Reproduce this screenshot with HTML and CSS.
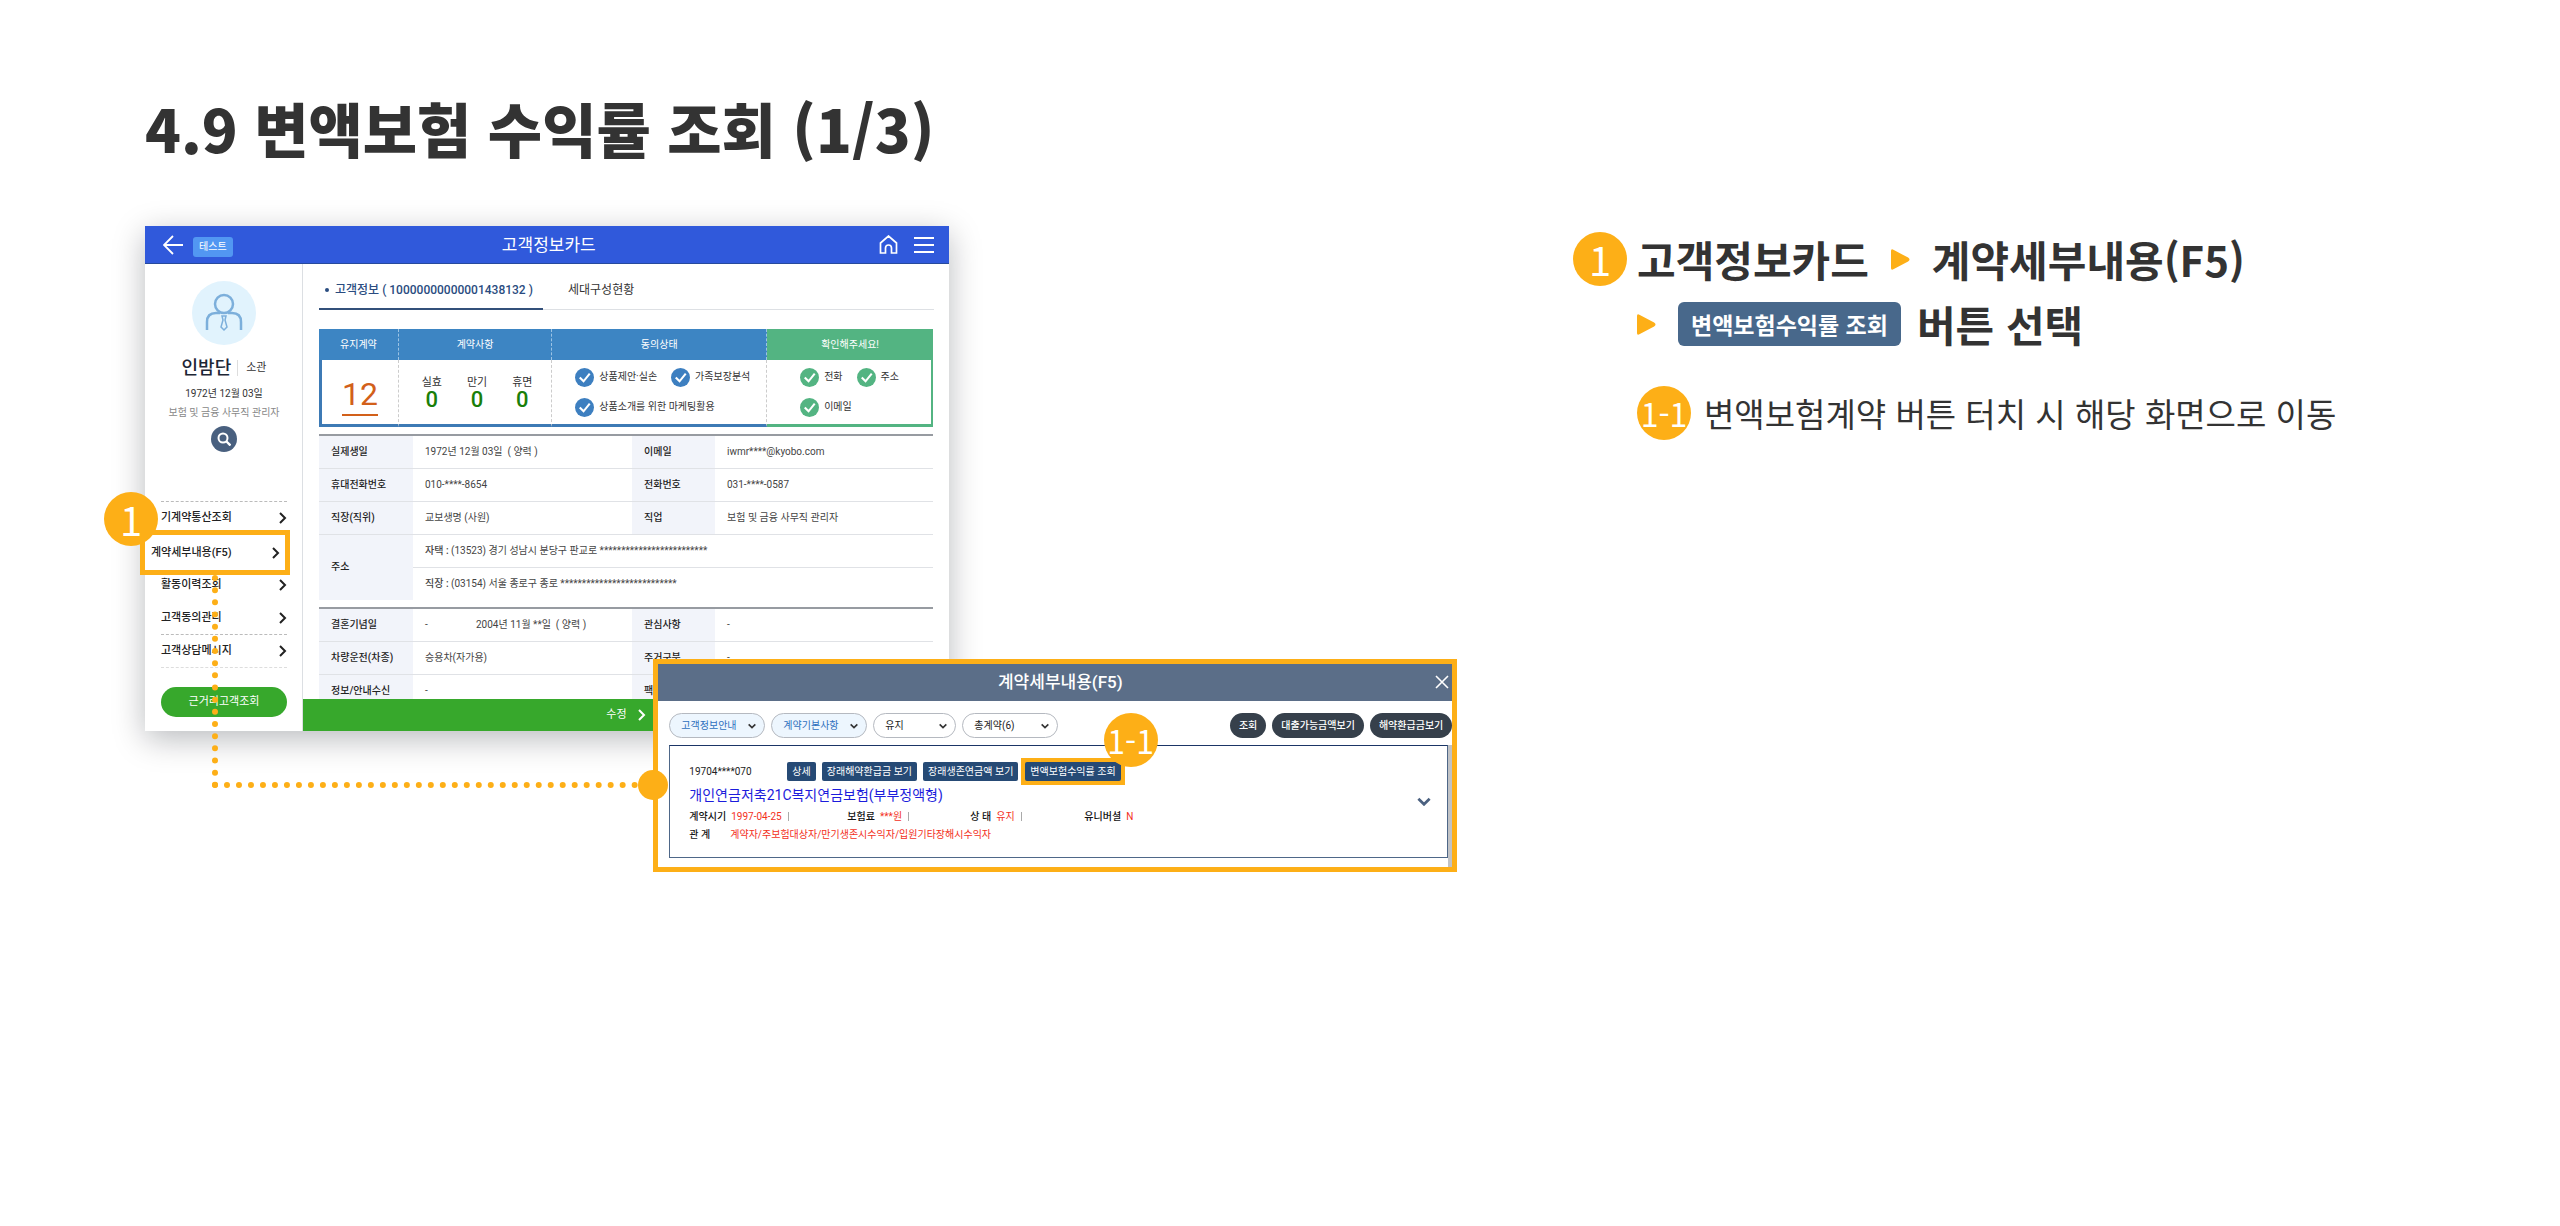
FILE: index.html
```html
<!DOCTYPE html>
<html lang="ko">
<head>
<meta charset="utf-8">
<meta name="viewport" content="width=device-width, initial-scale=1">
<title>4.9 변액보험 수익률 조회</title>
<link rel="stylesheet" href="styles.css">
</head>
<body>
<svg class="defs" aria-hidden="true">
  <symbol id="chev-right" viewBox="0 0 8 12"><path d="M1 1l5 5-5 5" fill="none" stroke="currentColor" stroke-width="2"/></symbol>
  <symbol id="chev-down" viewBox="0 0 12 8"><path d="M1 1.5l5 5 5-5" fill="none" stroke="currentColor" stroke-width="2.4"/></symbol>
  <symbol id="check" viewBox="0 0 20 20"><circle cx="10" cy="10" r="10" fill="currentColor"/><path d="M5 10l4 4 6.500-8" fill="none" stroke="#fff" stroke-width="2.200"/></symbol>
  <symbol id="arrow" viewBox="0 0 20 22"><path d="M0 2q0-3 3-1l15 8q3 2 0 4L3 21q-3 2-3-1z" fill="currentColor"/></symbol>
</svg>
<main class="page">
  <h1 class="page-title">4.9 변액보험 수익률 조회 (1/3)</h1>

  <div class="columns">
    <section class="stage">
      <div class="card">
        <header class="card-head">
          <button class="icon-btn" aria-label="뒤로"><svg width="20" height="20" viewBox="0 0 20 20"><path d="M20 10H1M10 1L1 10l9 9" fill="none" stroke="#fff" stroke-width="1.800"/></svg></button>
          <span class="tag">테스트</span>
          <h2 class="card-title">고객정보카드</h2>
          <button class="icon-btn" aria-label="홈"><svg width="19" height="19" viewBox="0 0 19 19"><path d="M1.500 8L9.500 1l8 7v10h-5v-5q0-3-3-3t-3 3v5h-5z" fill="none" stroke="#fff" stroke-width="1.700"/></svg></button>
          <button class="icon-btn" aria-label="메뉴"><svg width="20" height="18" viewBox="0 0 20 18"><path d="M0 2h20M0 9h20M0 16h20" stroke="#fff" stroke-width="1.800"/></svg></button>
        </header>

        <div class="card-body">
          <aside class="side">
            <svg class="avatar" width="64" height="64" viewBox="0 0 64 64"><circle cx="32" cy="32" r="32" fill="#e1f3fd"/><g fill="none" stroke="#7cafdb" stroke-width="2.500"><circle cx="32" cy="23" r="9"/><path d="M15 49V41q0-9 9-9M49 49V41q0-9-9-9M24 32h4M36 32h4"/><path d="M30 35h4l-1 4 2 7-3 3-3-3 2-7z" stroke-width="1.500"/></g></svg>
            <p class="name-row"><strong class="name">인밤단</strong><span class="name-tag">소관</span></p>
            <p class="birth">1972년 12월 03일</p>
            <p class="job">보험 및 금융 사무직 관리자</p>
            <button class="search" aria-label="검색"><svg width="14" height="14" viewBox="0 0 14 14"><circle cx="6" cy="6" r="4.500" fill="none" stroke="#fff" stroke-width="2"/><path d="M9.500 9.500l4 4" stroke="#fff" stroke-width="2.400"/></svg></button>
            <ul class="menu">
              <li class="menu-item dashed"><a href="#">기계약통산조회<svg width="8" height="12"><use href="#chev-right"/></svg></a></li>
              <li class="menu-item current"><span class="badge badge-menu">1</span><a href="#">계약세부내용(F5)<svg width="8" height="12"><use href="#chev-right"/></svg></a></li>
              <li class="menu-item"><a href="#">활동이력조회<svg width="8" height="12"><use href="#chev-right"/></svg></a></li>
              <li class="menu-item"><a href="#">고객동의관리<svg width="8" height="12"><use href="#chev-right"/></svg></a></li>
              <li class="menu-item dashed last"><a href="#">고객상담메시지<svg width="8" height="12"><use href="#chev-right"/></svg></a></li>
            </ul>
            <button class="near">근거리고객조회</button>
          </aside>

          <div class="content">
            <nav class="tabs">
              <a class="tab on" href="#">고객정보 ( 10000000000001438132 )</a>
              <a class="tab" href="#">세대구성현황</a>
            </nav>

            <table class="summary">
              <colgroup><col class="s1"><col class="s2"><col class="s3"><col class="s4"></colgroup>
              <thead><tr><th>유지계약</th><th>계약사항</th><th>동의상태</th><th class="green">확인해주세요!</th></tr></thead>
              <tbody><tr>
                <td class="total"><a href="#">12</a></td>
                <td><div class="counts"><span>실효<b>0</b></span><span>만기<b>0</b></span><span>휴면<b>0</b></span></div></td>
                <td><div class="checks blue">
                  <span><svg width="19" height="19"><use href="#check"/></svg>상품제안·실손</span>
                  <span><svg width="19" height="19"><use href="#check"/></svg>가족보장분석</span>
                  <span><svg width="19" height="19"><use href="#check"/></svg>상품소개를 위한 마케팅활용</span>
                </div></td>
                <td class="green-cell"><div class="checks mint">
                  <span><svg width="19" height="19"><use href="#check"/></svg>전화</span>
                  <span><svg width="19" height="19"><use href="#check"/></svg>주소</span>
                  <span><svg width="19" height="19"><use href="#check"/></svg>이메일</span>
                </div></td>
              </tr></tbody>
            </table>

            <table class="info">
              <colgroup><col class="k1"><col class="v1"><col class="k2"><col class="v2"></colgroup>
              <tr><th>실제생일</th><td>1972년 12월 03일 &nbsp;( 양력 )</td><th>이메일</th><td>iwmr****@kyobo.com</td></tr>
              <tr><th>휴대전화번호</th><td>010-****-8654</td><th>전화번호</th><td>031-****-0587</td></tr>
              <tr><th>직장(직위)</th><td>교보생명 (사원)</td><th>직업</th><td>보험 및 금융 사무직 관리자</td></tr>
              <tr><th rowspan="2">주소</th><td colspan="3"><b>자택 :</b> (13523) 경기 성남시 분당구 판교로 *************************</td></tr>
              <tr><td colspan="3"><b>직장 :</b> (03154) 서울 종로구 종로 ***************************</td></tr>
            </table>

            <table class="info">
              <colgroup><col class="k1"><col class="v1"><col class="k2"><col class="v2"></colgroup>
              <tr><th>결혼기념일</th><td><span class="dash">-</span>2004년 11월 **일 &nbsp;( 양력 )</td><th>관심사항</th><td>-</td></tr>
              <tr><th>차량운전(차종)</th><td>승용차(자가용)</td><th>주거구분</th><td>-</td></tr>
              <tr><th>정보/안내수신</th><td>-</td><th>팩스</th><td>-</td></tr>
            </table>

            <button class="edit">수정<svg width="8" height="12"><use href="#chev-right"/></svg></button>
          </div>
        </div>
      </div>

      <div class="connector"></div>

      <div class="popup">
        <header class="popup-head">
          <h2 class="popup-title">계약세부내용(F5)</h2>
          <button class="close" aria-label="닫기"><svg width="14" height="14" viewBox="0 0 14 14"><path d="M1 1l12 12M13 1L1 13" stroke="#fff" stroke-width="1.600"/></svg></button>
        </header>
        <div class="filters">
          <span class="pick tinted"><select aria-label="고객정보안내"><option>고객정보안내</option></select><svg width="8" height="6"><use href="#chev-down"/></svg></span>
          <span class="pick tinted"><select aria-label="계약기본사항"><option>계약기본사항</option></select><svg width="8" height="6"><use href="#chev-down"/></svg></span>
          <span class="pick short"><select aria-label="상태"><option>유지</option></select><svg width="8" height="6"><use href="#chev-down"/></svg></span>
          <span class="pick"><select aria-label="총계약"><option>총계약(6)</option></select><svg width="8" height="6"><use href="#chev-down"/></svg></span>
          <div class="actions">
            <button class="pill">조회</button>
            <button class="pill">대출가능금액보기</button>
            <button class="pill">해약환급금보기</button>
          </div>
        </div>
        <div class="list">
          <article class="contract">
            <div class="contract-main">
              <div class="contract-top">
                <span class="number">19704****070</span>
                <button class="small">상세</button>
                <button class="small">장래해약환급금 보기</button>
                <button class="small">장래생존연금액 보기</button>
                <span class="mark"><button class="small">변액보험수익률 조회</button><span class="badge badge-mark">1-1</span></span>
              </div>
              <h3 class="product">개인연금저축21C복지연금보험(부부정액형)</h3>
              <dl class="facts">
                <div><dt>계약시기</dt><dd class="ruled">1997-04-25</dd></div>
                <div><dt>보험료</dt><dd class="ruled">***원</dd></div>
                <div><dt>상 태</dt><dd class="ruled">유지</dd></div>
                <div><dt>유니버셜</dt><dd>N</dd></div>
                <div class="wide"><dt>관 계</dt><dd>계약자/주보험대상자/만기생존시수익자/입원기타장해시수익자</dd></div>
              </dl>
            </div>
            <button class="expand" aria-label="펼치기"><svg width="14" height="9"><use href="#chev-down"/></svg></button>
          </article>
        </div>
        <span class="anchor"></span>
      </div>
    </section>

    <section class="steps">
      <span class="badge">1</span>
      <div class="step-text">
        <p class="step-line">고객정보카드<svg class="arrow gap" width="19" height="21"><use href="#arrow"/></svg>계약세부내용(F5)</p>
        <p class="step-line"><svg class="arrow" width="19" height="21"><use href="#arrow"/></svg><button class="step-btn">변액보험수익률 조회</button>버튼 선택</p>
        <p class="sub-step"><span class="badge badge-sub">1-1</span>변액보험계약 버튼 터치 시 해당 화면으로 이동</p>
      </div>
    </section>
  </div>
</main>
</body>
</html>
```
FILE: styles.css
```css
* { box-sizing: border-box; }
body, h1, h2, h3, p, ul, dl, dd { margin: 0; padding: 0; }
body {
  background: #fff;
  color: #333;
  font-family: "Noto Sans CJK KR", sans-serif;
}
button, select { font: inherit; border: 0; margin: 0; padding: 0; background: none; color: inherit; cursor: pointer; }
a { color: inherit; text-decoration: none; }
svg { display: block; flex: none; }
.defs { position: absolute; width: 0; height: 0; }

.page { padding: 82px 145px 120px; }
.page-title { font-size: 59px; line-height: 92px; font-weight: 900; color: #333; white-space: nowrap; }
.columns { display: grid; grid-template-columns: 1428fr 842fr; padding-top: 52px; }

.badge {
  display: flex; align-items: center; justify-content: center; flex: none;
  width: 54px; height: 54px; border-radius: 50%;
  background: #fdaf17; color: #fff;
  font: 400 40px/54px "Noto Sans CJK KR", sans-serif;
}

/* stage holds the customer card with the detail window laid over it */
.stage {
  position: relative;
  padding-bottom: 141px;
  font-family: Roboto, "Noto Sans CJK KR", sans-serif;
  font-size: 10px;
  line-height: 16px;
  white-space: nowrap;
}
.card { width: 56.3%; background: #fff; box-shadow: 0 8px 30px rgba(0, 10, 20, .28); }
.card-head {
  display: flex; align-items: center; gap: 16px;
  height: 38px; padding: 0 15px 0 18px;
  background: #3059db; border-bottom: 1px solid #274a9c; color: #fff;
}
.icon-btn { display: flex; }
.tag { margin: 4px 0 0 -6px; padding: 2px 6px; border-radius: 3px; background: #5297f2; }
.card-title { flex: 1; margin-right: 14px; text-align: center; font-size: 17px; line-height: 24px; font-weight: 400; }
.card-body { display: grid; grid-template-columns: 158px 1fr; height: 467px; }

.side {
  display: flex; flex-direction: column; align-items: center;
  padding: 17px 15px 13px 16px; border-right: 1px solid #dcdfe3;
}
.name-row { display: flex; align-items: center; margin-top: 10px; }
.name { padding-right: 6px; font-size: 18px; line-height: 26px; font-weight: 500; color: #1d2635; }
.name-tag { padding-left: 8px; border-left: 1px solid #ddd; font-size: 11px; }
.birth { margin-top: 5px; color: #333; }
.job { margin-top: 3px; color: #888; }
.search {
  display: flex; align-items: center; justify-content: center;
  width: 26px; height: 26px; margin-top: 5px; border-radius: 50%; background: #49607f;
}
.menu { list-style: none; width: 126px; margin-top: 49px; }
.menu-item { position: relative; height: 33px; font-size: 11px; color: #222; font-weight: 500; }
.menu-item a { display: flex; align-items: center; justify-content: space-between; height: 100%; }
.menu-item.dashed { border-top: 1px dashed #bbb; }
.menu-item.last { height: 34px; border-bottom: 1px dashed #ddd; }
.menu-item.current {
  z-index: 1; width: 150px; height: 45px; margin: -4px 0 -7px -21px; padding: 0 5px 0 6px;
  border: 5px solid #fdaf17; background: #fff;
}
.badge-menu { position: absolute; left: -41px; top: -43px; }
.near { width: 126px; height: 30px; margin-top: 19px; border-radius: 15px; background: #37a82c; color: #fff; font-size: 11px; }

.content { display: flex; flex-direction: column; min-width: 0; padding-left: 16px; overflow: hidden; position: relative; }
.tabs { display: flex; margin-right: 15px; margin-top: 8px; border-bottom: 1px solid #dde0e4; font-size: 12px; line-height: 36px; }
.tab { padding-left: 25px; color: #333; }
.tab.on { width: 224px; padding-left: 16px; margin-bottom: -1px; border-bottom: 2px solid #33507a; color: #2a4c80; font-weight: 500; position: relative; }
.tab.on::before { content: ""; position: absolute; left: 6px; top: 16px; width: 4px; height: 4px; border-radius: 50%; background: #2a4c80; }

table { border-collapse: collapse; table-layout: fixed; }
.summary { flex: none; width: calc(100% - 16px); margin-top: 19px; border-spacing: 0; border-collapse: separate; }
.s1 { width: 13%; } .s2 { width: 25%; } .s3 { width: 35%; } .s4 { width: 27%; }
.summary th { height: 31px; padding: 0; background: #3d85c3; color: #fff; font-weight: 400; border-right: 1px dashed #9cc3e4; }
.summary th.green { background: #53b482; border-right: 0; }
.summary td { height: 67px; padding: 0; border-bottom: 3px solid #3d7ab5; border-right: 1px dashed #ccc; }
.summary td.total { border-left: 3px solid #3d7ab5; text-align: center; vertical-align: top; }
.summary td.green-cell { border-bottom-color: #53b482; border-right: 2px solid #53b482; }
.total a { display: inline-block; margin-top: 14px; font-size: 32px; line-height: 40px; color: #d2601a; border-bottom: 2px solid #d2601a; }
.counts { display: flex; justify-content: center; gap: 25px; padding-left: 4px; font-size: 11px; line-height: 16px; text-align: center; }
.counts b { display: block; font-size: 22px; line-height: 18px; font-weight: 500; color: #1a7f0a; }
.checks { display: flex; flex-wrap: wrap; gap: 11px 14px; padding-left: 23px; }
.checks span { display: flex; align-items: center; gap: 5px; }
.blue svg { color: #3d7fc0; }
.mint { padding-left: 33px; }
.mint svg { color: #53b482; }

.info { flex: none; width: calc(100% - 16px); margin-top: 7px; border-top: 2px solid #979ba1; }
.k1 { width: 94px; } .v1 { width: 219px; } .k2 { width: 83px; }
.info th, .info td { height: 33px; padding: 0 12px; text-align: left; font-weight: 400; color: #444; border-bottom: 1px solid #e0e2e6; }
.info th { background: #f2f4fa; font-weight: 500; color: #222; }
.info tr:last-child td, .info th[rowspan] { border-bottom: 0; }
.info b { font-weight: 500; }
.dash { display: inline-block; width: 51px; }
.edit {
  position: absolute; left: 0; right: 0; bottom: 0; height: 32px;
  display: flex; align-items: center; justify-content: center; gap: 11px;
  background: #37a82c; color: #fff; font-size: 11px;
}

/* dotted line from the menu entry down to the detail window */
.connector {
  position: absolute; left: 67px; top: 349px; width: calc(35.6% - 82px); height: 213px;
  border-left: 6px dotted #fdaf17; border-bottom: 6px dotted #fdaf17;
}
.popup { position: absolute; left: 35.6%; top: 433px; width: 56.3%; border: 5px solid #fdaf17; background: #fff; }
.popup-head { display: flex; align-items: center; height: 37px; padding: 0 3px 2px 0; background: #5b6e88; color: #fff; }
.popup-title { flex: 1; padding-left: 27px; text-align: center; font-size: 17px; line-height: 24px; font-weight: 500; }
.filters { display: flex; gap: 6px; padding: 12px 0 7px 11px; }
.pick { position: relative; width: 96px; height: 25px; }
.pick.short { width: 83px; }
.pick select { appearance: none; width: 100%; height: 100%; padding-left: 11px; border: 1px solid #b5b9c0; border-radius: 13px; color: #222; }
.pick.tinted select { background: #edf6fe; color: #2d6fbd; }
.pick svg { position: absolute; right: 9px; top: 10px; pointer-events: none; }
.actions { display: flex; gap: 6px; margin-left: auto; }
.pill { height: 25px; padding: 0 9px; border-radius: 13px; background: #36404b; color: #fff; font-weight: 500; }
.list { padding: 0 0 9px 11px; border-right: 4px solid #c0c2c5; }
.contract { display: flex; align-items: center; border: 1px solid #4e6788; border-top-color: #1b3566; height: 113px; }
.contract-main { flex: 1; padding: 2px 0 0 19px; }
.contract-top { display: flex; align-items: center; gap: 6px; height: 19px; }
.number { width: 92px; color: #222; }
.small { height: 19px; padding: 0 5px; border-radius: 2px; background: #264a75; color: #fff; line-height: 19px; }
.mark { position: relative; margin-left: -3px; border: 4px solid #fdaf17; background: #fdaf17; display: flex; }
.badge-mark { position: absolute; right: -37px; top: -49px; }
.badge-mark, .badge-sub { font-size: 32px; }
.product { margin-top: 3px; font-size: 14px; line-height: 22px; font-weight: 400; color: #1c1cdc; }
.facts { display: grid; grid-template-columns: 158px 123px 114px 1fr; row-gap: 2px; margin-top: 3px; }
.facts div { display: flex; align-items: center; gap: 5px; }
.facts .wide { grid-column: 1 / -1; gap: 20px; }
.facts dt { font-weight: 500; color: #111; }
.facts dd { color: #f3301c; line-height: 16px; }
.ruled::after { content: ""; display: inline-block; height: 9px; margin-left: 6px; border-right: 1px solid #aaa; vertical-align: -1px; }
.expand { padding: 0 16px; color: #4b6180; }
.anchor { position: absolute; left: -20px; top: 106px; width: 30px; height: 30px; border-radius: 50%; background: #fdaf17; }

.steps { display: flex; gap: 10px; padding-top: 6px; white-space: nowrap; }
.step-text { font-size: 42px; line-height: 54px; font-weight: 700; }
.step-line { display: flex; align-items: center; height: 54px; margin-bottom: 11px; }
.arrow { color: #fdaf17; }
.arrow.gap { margin: 0 22px; }
.step-btn {
  height: 44px; margin: 0 16px 0 22px; padding: 0 13px; border-radius: 6px;
  background: #48688b; color: #fff; font-size: 23px; line-height: 44px; font-weight: 700;
}
.sub-step { display: flex; align-items: center; gap: 13px; margin-top: 35px; font-size: 33px; font-weight: 400; }
```
